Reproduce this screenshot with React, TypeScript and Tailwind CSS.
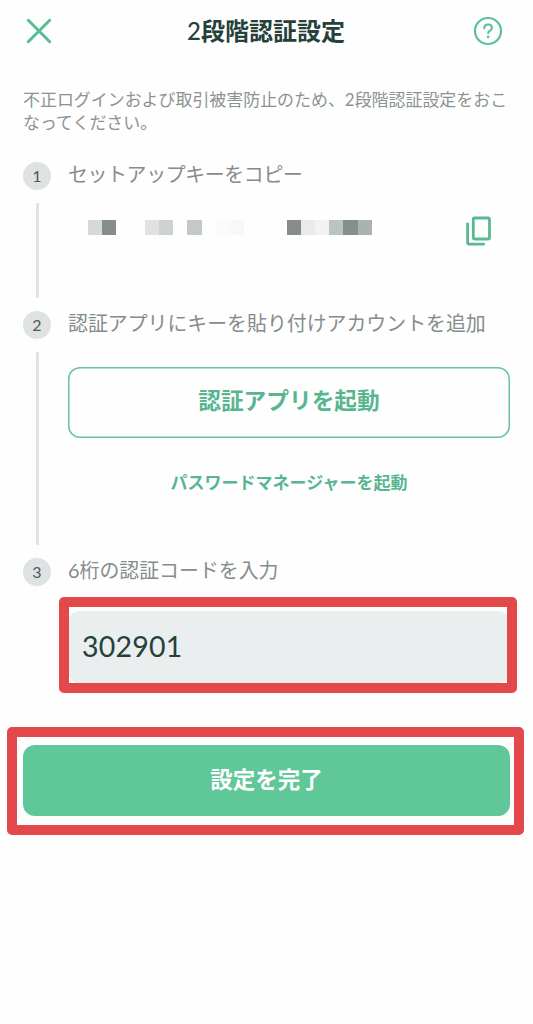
import React from 'react';

interface StepProps {
  no: number;
  title: string;
  last?: boolean;
  className: string;
  titleClassName?: string;
  children: React.ReactNode;
}

const Step: React.FC<StepProps> = ({ no, title, last, className, titleClassName = '', children }) => (
  <section className={`flex ${className}`}>
    <div className="flex w-7 shrink-0 flex-col items-center">
      <span className="flex h-7 w-7 shrink-0 items-center justify-center rounded-full bg-[#dee2e3] pb-px text-[16px] text-[#4d5a56]">{no}</span>
      {!last && <span className="my-[13px] w-[3px] flex-1 rounded-[1px] bg-[#e1e3e3]" />}
    </div>
    <div className="ml-[17px] flex-1">
      <h2 className={`h-[26px] text-[19.9px] leading-[25px] whitespace-nowrap text-[#848d8a] ${titleClassName}`}>{title}</h2>
      {children}
    </div>
  </section>
);

// masked setup key, one entry per 14px cell
const maskCells = [
  '#d5dad8', '#858e8a', '', '', '#dfe2e1', '#cdd2d0', '', '#c3c9c7', '', '#fafafa', '#f7f8f7', '', '', '',
  '#858c89', '#e9ebea', '#f1f2f1', '#bcc4c1', '#84908b', '#abb2af',
];

const App: React.FC = () => {
  return (
    <div className="min-h-screen w-full bg-[#fefefe] font-[Lato,'Noto_Sans_CJK_JP',sans-serif]">
      <header className="flex h-[62px] items-center justify-between pr-[30px] pl-[26px]">
        <svg width="26" height="26" viewBox="0 0 26 26" fill="none" stroke="#57bd93" strokeWidth="3" strokeLinecap="round">
          <path d="M2.3 2.3 23.7 23.7M23.7 2.3 2.3 23.7" />
        </svg>
        <h1 className="pl-[7px] text-[24px] leading-[30px] font-bold text-[#25413a]"><span className="font-medium">2</span>段階認証設定</h1>
        <svg width="30" height="30" viewBox="0 0 30 30" fill="none" stroke="#5cc198" strokeLinecap="round" strokeLinejoin="round">
          <circle cx="15" cy="15" r="13" strokeWidth="2.2" />
          <path d="M11.2 12.2c0-2.3 1.7-3.7 3.9-3.7s3.8 1.4 3.8 3.4c0 2.7-3.7 2.8-3.7 5.2" strokeWidth="2.1" />
          <path d="M15.1 20.8v.2" strokeWidth="2.6" />
        </svg>
      </header>

      <main className="px-[23px] pt-[26px]">
        <p className="h-[74px] text-[16.95px] leading-[23px] whitespace-nowrap text-[#8b9390]">
          不正ログインおよび取引被害防止のため、2段階認証設定をおこ<br />なってください。
        </p>

        <Step no={1} title="セットアップキーをコピー" className="h-[149px]" titleClassName="tracking-[-0.35px]">
          <div className="flex items-start pt-[26px] pl-5">
            <div className="mt-[6px] flex">
              {maskCells.map((color, i) => (
                <span key={i} className="h-[14.5px] w-[14.2px]" style={{ backgroundColor: color || 'transparent' }} />
              ))}
            </div>
            <svg className="mt-[1px] ml-[93px]" width="28" height="32" viewBox="0 0 28 32" fill="none" stroke="#59b991" strokeWidth="2.8" strokeLinecap="round" strokeLinejoin="round">
              <rect x="8.3" y="3" width="16.2" height="21" rx="1.5" />
              <path d="M2.6 8.8V27.2a2 2 0 0 0 2 2H18.6" />
            </svg>
          </div>
        </Step>

        <Step no={2} title="認証アプリにキーを貼り付けアカウントを追加" className="h-[247px]">
          <div className="flex w-[442px] flex-col items-center pt-[30px]">
            <button className="h-[71px] w-full rounded-[12px] pb-[2px] text-[22.7px] font-bold text-[#58b68f] shadow-[inset_0_0_0_1.5px_#66c49d]">
              認証アプリを起動
            </button>
            <button className="mt-[33px] text-[17px] leading-[24px] font-bold text-[#58b68f]">パスワードマネージャーを起動</button>
          </div>
        </Step>

        <Step no={3} title="6桁の認証コードを入力" last className="h-[187px]">
          <div className="relative mt-[27px] flex h-[72px] w-[442px] items-center rounded-[12px] bg-[#eaeeef] pb-[2px] pl-[14px] text-[28.5px] tracking-[0.2px] text-[#25413a]">
            302901
            <span className="pointer-events-none absolute -top-[14px] -right-[7px] -bottom-[10px] -left-[9px] rounded-[5px] border-[10px] border-[#e3484b]" />
          </div>
        </Step>

        <div className="relative w-[487px]">
          <button className="h-[71px] w-full rounded-[12px] bg-[#5fc798] pb-[1px] text-[22.5px] font-bold text-white">設定を完了</button>
          <span className="pointer-events-none absolute -top-[18px] -right-[14px] -bottom-[19px] -left-[16px] rounded-[5px] border-[10px] border-[#e3484b]" />
        </div>
      </main>
    </div>
  );
};

export default App;
